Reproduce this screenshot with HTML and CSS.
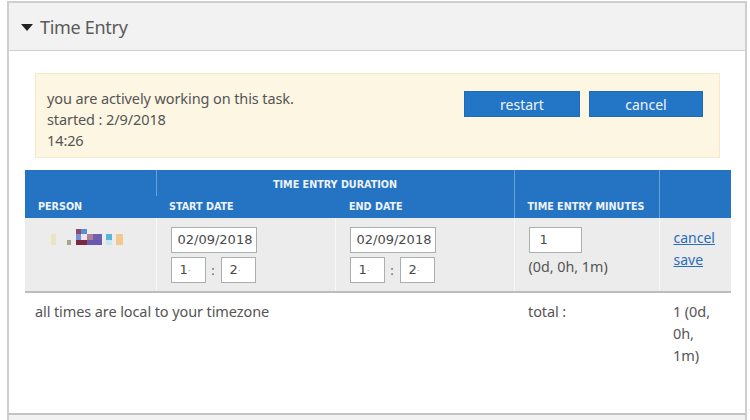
FILE: index.html
```html
<!DOCTYPE html>
<html>
<head>
<meta charset="utf-8">
<link rel="stylesheet" href="styles.css">
</head>
<body>
<div class="panel">
  <div class="panel-head">
    <span class="caret"></span>
    <span class="title">Time Entry</span>
  </div>
  <div class="panel-body">
    <div class="alert">
      <div class="alert-text">
        <div>you are actively working on this task.</div>
        <div>started : 2/9/2018</div>
        <div>14:26</div>
      </div>
      <div class="alert-actions">
        <button class="btn">restart</button>
        <button class="btn">cancel</button>
      </div>
    </div>
    <table class="entries">
      <colgroup>
        <col class="c-person"><col class="c-start"><col class="c-end"><col class="c-min"><col class="c-act">
      </colgroup>
      <thead>
        <tr class="h1">
          <th rowspan="2" class="bottom">PERSON</th>
          <th colspan="2" class="center">TIME ENTRY DURATION</th>
          <th rowspan="2" class="bottom">TIME ENTRY MINUTES</th>
          <th rowspan="2"></th>
        </tr>
        <tr class="h2">
          <th>START DATE</th>
          <th>END DATE</th>
        </tr>
      </thead>
      <tbody>
        <tr class="data">
          <td class="person">
            <svg width="80" height="20" viewBox="52 227 80 20">
              <rect x="52" y="233" width="5" height="11" fill="#ece3c0"/>
              <rect x="68" y="239" width="4" height="5" fill="#a4a78a"/>
              <rect x="77" y="228" width="5" height="5" fill="#8a4a6a"/>
              <rect x="82" y="228" width="6" height="5" fill="#5b8fd0"/>
              <rect x="77" y="233" width="5" height="6" fill="#7a8fd8"/>
              <rect x="82" y="233" width="6" height="6" fill="#e9e4ee"/>
              <rect x="88" y="233" width="6" height="6" fill="#b08090"/>
              <rect x="94" y="233" width="9" height="6" fill="#7060b0"/>
              <rect x="77" y="239" width="11" height="5" fill="#7a2a40"/>
              <rect x="88" y="239" width="15" height="5" fill="#6a58b0"/>
              <rect x="107" y="233" width="6" height="6" fill="#5ab4d6"/>
              <rect x="107" y="239" width="6" height="5" fill="#c8e8ee"/>
              <rect x="117" y="233" width="7" height="11" fill="#f0c890"/>
            </svg>
          </td>
          <td>
            <div class="date-in">02/09/2018</div>
            <div class="time-row"><span class="tin">1<i>·</i></span><span class="colon">:</span><span class="tin">2<i>·</i></span></div>
          </td>
          <td>
            <div class="date-in">02/09/2018</div>
            <div class="time-row"><span class="tin">1<i>·</i></span><span class="colon">:</span><span class="tin">2<i>·</i></span></div>
          </td>
          <td>
            <div class="min-in">1</div>
            <div class="min-note">(0d, 0h, 1m)</div>
          </td>
          <td class="acts">
            <a href="#">cancel</a>
            <a href="#">save</a>
          </td>
        </tr>
        <tr class="foot">
          <td colspan="3">all times are local to your timezone</td>
          <td>total :</td>
          <td><span class="total">1 (0d, 0h, 1m)</span></td>
        </tr>
      </tbody>
    </table>
  </div>
</div>
<div class="panel-next"></div>
</body>
</html>
```
FILE: styles.css
```css
html, body {
  margin: 0;
  padding: 0;
  background: #ffffff;
}
body {
  font-family: "Noto Sans", "Open Sans", sans-serif;
  color: #555;
  overflow: hidden;
  height: 420px;
}
.panel {
  margin: 1px 0 0 7px;
  width: 736px;
  border: 2px solid #cfcfcf;
  border-bottom: 2px solid #c4c4c4;
}
.panel-head {
  height: 47px;
  background: #f2f2f2;
  border-bottom: 1px solid #cfcfcf;
  display: flex;
  align-items: center;
  padding-left: 12px;
}
.caret {
  width: 0;
  height: 0;
  border-left: 6px solid transparent;
  border-right: 6px solid transparent;
  border-top: 7px solid #222;
  margin-right: 7px;
  margin-top: 1px;
}
.title {
  font-size: 18px;
  color: #5a5a5a;
  letter-spacing: -0.3px;
}
.panel-body {
  padding: 22px 14px 0 16px;
  height: 340px;
}
.alert {
  margin: 0 11px 0 10px;
  height: 85px;
  background: #fcf6e3;
  border: 1px solid #f7e9c8;
  display: flex;
  justify-content: space-between;
  box-sizing: border-box;
}
.alert-text {
  padding: 14px 0 0 11px;
  font-size: 14.5px;
  line-height: 21px;
  color: #555;
  letter-spacing: -0.1px;
}
.alert-actions {
  display: flex;
  gap: 9px;
  padding: 17px 16px 0 0;
  align-items: flex-start;
}
.btn {
  width: 116px;
  height: 26px;
  background: #2375c6;
  border: 1px solid #1e6bb6;
  color: #f0f4ff;
  font-family: "Noto Sans", "Open Sans", sans-serif;
  font-size: 14px;
  padding: 0;
}
.btn + .btn { width: 114px; }
.entries {
  margin-top: 12px;
  width: 706px;
  border-collapse: collapse;
  table-layout: fixed;
}
.c-person { width: 131px; }
.c-start { width: 179px; }
.c-end { width: 179px; }
.c-min { width: 145px; }
.c-act { width: 72px; }
.entries thead th {
  background: #2573c3;
  color: #eef3fb;
  font-family: "DejaVu Sans Condensed", "DejaVu Sans", sans-serif;
  font-weight: bold;
  font-size: 10.7px;
  text-align: left;
  padding: 0 0 0 13px;
  border-left: 1px solid #6b9fd6;
}
.entries thead th:first-child { border-left: none; }
.entries .h1 th { height: 26px; vertical-align: bottom; padding-bottom: 5px; box-sizing: border-box; }
.entries .h1 th.bottom { vertical-align: bottom; padding-bottom: 5px; }
.entries .h1 th.center { text-align: center; padding-left: 0; }
.entries .h2 th { height: 22px; vertical-align: bottom; padding-bottom: 5px; border-left: none; box-sizing: border-box; }
.entries .h2 th + th { padding-left: 14px; }
.data td {
  background: #ececec;
  height: 74px;
  vertical-align: top;
  padding: 9px 0 0 14px;
  border-left: 1px solid #f8f8f8;
  border-bottom: 2px solid #bdbdbd;
  box-sizing: border-box;
}
.data td:first-child { border-left: none; }
.data td.person { padding: 10px 0 0 26px; }
.person svg { display: block; }
.date-in, .min-in, .tin {
  box-sizing: border-box;
  background: #fff;
  border: 1px solid #a9b0ad;
  height: 26px;
  font-family: "DejaVu Sans", sans-serif;
  font-size: 13px;
  color: #4a4a4a;
  line-height: 24px;
}
.date-in {
  width: 86px;
  padding-left: 6px;
}
.time-row {
  margin-top: 4px;
  display: flex;
  align-items: center;
}
.tin {
  width: 35px;
  padding-left: 8px;
  display: inline-block;
}
.tin i { font-style: normal; color: #999; font-size: 9px; }
.colon {
  width: 15px;
  text-align: center;
  font-size: 13px;
  color: #666;
}
.min-in {
  width: 53px;
  padding-left: 10px;
}
.min-note {
  margin-top: 4px;
  font-size: 14.3px;
  color: #555;
}
.acts a {
  display: block;
  color: #2a6dbb;
  font-size: 14px;
  line-height: 22px;
}
.foot td {
  padding: 7px 0 0 14px;
  font-size: 14.5px;
  line-height: 22px;
  vertical-align: top;
  color: #555;
  letter-spacing: -0.1px;
}
.foot td:first-child { padding-left: 10px; }
.total {
  display: block;
  width: 44px;
}
.panel-next {
  margin-left: 7px;
  width: 736px;
  height: 20px;
  background: #f2f2f2;
  border-left: 2px solid #cfcfcf;
  border-right: 2px solid #cfcfcf;
}
```
